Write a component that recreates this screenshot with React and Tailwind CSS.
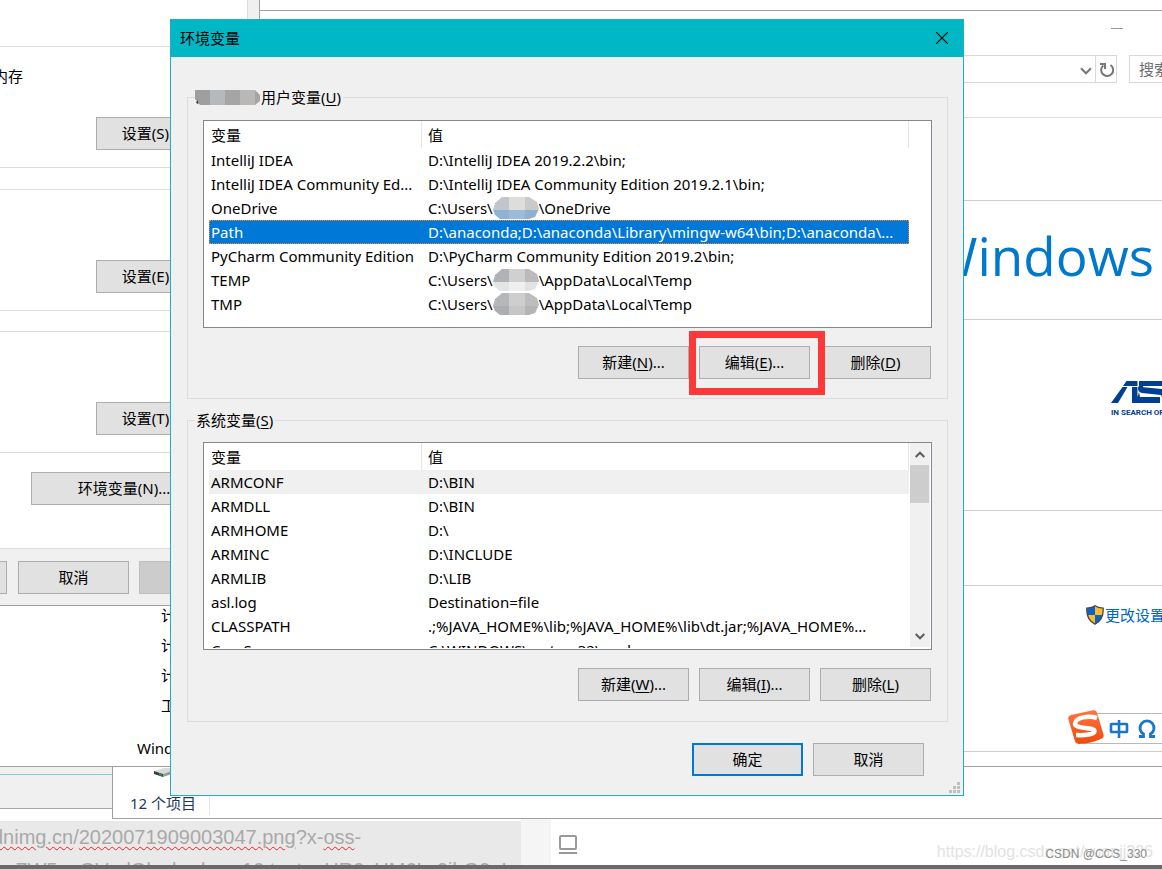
import React from "react";

const BTN =
  "flex h-[33px] w-[111px] shrink-0 items-center justify-center border border-[#adadad] bg-[#e1e1e1] pb-0.5 whitespace-nowrap";

function Key({ text, k, tail = "" }) {
  return (
    <span>
      {text}(<span className="underline underline-offset-2">{k}</span>){tail}
    </span>
  );
}

function Mosaic({ colors }) {
  return (
    <svg viewBox="0 0 46 22" className="inline-block h-[22px] w-[46px] align-middle" aria-hidden="true">
      <defs>
        <clipPath id={"m" + colors.join("").replace(/#/g, "")}>
          <path d="M9 0h27l8 5 2 7-4 8-6 2H7l-5-4-2-5 2-7z" />
        </clipPath>
      </defs>
      <g clipPath={`url(#m${colors.join("").replace(/#/g, "")})`}>
        {colors.map((c, i) => (
          <rect key={i} x={(i % 3) * 16} y={i < 3 ? 0 : 13} width="16" height="13" fill={c} />
        ))}
      </g>
    </svg>
  );
}

const userRows = [
  { name: "IntelliJ IDEA", value: "D:\\IntelliJ IDEA 2019.2.2\\bin;" },
  { name: "IntelliJ IDEA Community Ed...", value: "D:\\IntelliJ IDEA Community Edition 2019.2.1\\bin;" },
  {
    name: "OneDrive",
    value: "C:\\Users\\",
    mask: ["#c2c6ca", "#dddddb", "#cbcaca", "#8fb2d2", "#9dbbd8", "#8fb0cf"],
    rest: "\\OneDrive",
  },
  {
    name: "Path",
    value: "D:\\anaconda;D:\\anaconda\\Library\\mingw-w64\\bin;D:\\anaconda\\...",
    selected: true,
  },
  { name: "PyCharm Community Edition", value: "D:\\PyCharm Community Edition 2019.2\\bin;" },
  {
    name: "TEMP",
    value: "C:\\Users\\",
    mask: ["#b1b2b5", "#d0d0d0", "#bbbbbd", "#e3e4e4", "#efefef", "#e2e4e3"],
    rest: "\\AppData\\Local\\Temp",
  },
  {
    name: "TMP",
    value: "C:\\Users\\",
    mask: ["#b6b7b9", "#cecece", "#bcbdbe", "#adaeb1", "#c6c6c6", "#b3b4b5"],
    rest: "\\AppData\\Local\\Temp",
  },
];

const systemRows = [
  { name: "ARMCONF", value: "D:\\BIN", shaded: true },
  { name: "ARMDLL", value: "D:\\BIN" },
  { name: "ARMHOME", value: "D:\\" },
  { name: "ARMINC", value: "D:\\INCLUDE" },
  { name: "ARMLIB", value: "D:\\LIB" },
  { name: "asl.log", value: "Destination=file" },
  { name: "CLASSPATH", value: ".;%JAVA_HOME%\\lib;%JAVA_HOME%\\lib\\dt.jar;%JAVA_HOME%..." },
  { name: "ComSpec", value: "C:\\WINDOWS\\system32\\cmd.exe" },
];

function rowClass(row) {
  if (row.selected)
    return "h-6 bg-[#0078d7] text-white outline outline-1 -outline-offset-1 outline-dotted outline-[#ff8728]";
  if (row.shaded) return "h-6 bg-[#f0f0f0]";
  return "h-6";
}

function VariableTable({ rows, label }) {
  return (
    <table aria-label={label} className="w-full table-fixed border-separate border-spacing-0 text-left whitespace-nowrap">
      <colgroup>
        <col className="w-[213px]" />
        <col />
      </colgroup>
      <thead>
        <tr className="h-[27px]">
          <th className="border-r border-[#e5e5e5] p-0 pl-0.5 font-normal">变量</th>
          <th className="border-r border-[#e5e5e5] p-0 pl-1.5 font-normal">值</th>
        </tr>
      </thead>
      <tbody>
        {rows.map((row) => (
          <tr key={row.name} className={rowClass(row)}>
            <td className="p-0 pl-0.5 leading-6">{row.name}</td>
            <td className="p-0 pl-1.5 leading-6">
              <div className="flex h-6 items-center">
                {row.value}
                {row.mask && <Mosaic colors={row.mask} />}
                {row.rest}
              </div>
            </td>
          </tr>
        ))}
      </tbody>
    </table>
  );
}

function Chevron({ up }) {
  return (
    <svg viewBox="0 0 10 7" className="h-[7px] w-2.5" fill="none" stroke="#5c5c5c" strokeWidth="2">
      <path d={up ? "M.7 6L5 1.7 9.3 6" : "M.7 1L5 5.3 9.3 1"} />
    </svg>
  );
}

function Scrollbar() {
  return (
    <div className="mr-px mb-px flex w-[20px] shrink-0 flex-col bg-[#f0f0f0]">
      <button aria-label="向上滚动" className="flex h-[22px] w-[19px] items-center justify-center">
        <Chevron up />
      </button>
      <div className="h-[38px] w-[19px] bg-[#cdcdcd]" />
      <div className="flex-1" />
      <button aria-label="向下滚动" className="flex h-[22px] w-[19px] items-center justify-center">
        <Chevron />
      </button>
    </div>
  );
}

function EnvironmentDialog() {
  return (
    <section
      role="dialog"
      aria-label="环境变量"
      className="absolute top-[19px] left-[170px] z-20 w-[794px] border border-[#1fb0bd] bg-[#f0f0f0]"
    >
      <header className="flex h-[37px] items-center justify-between bg-[#00b7c6] pr-[15px] pb-0.5 pl-[9px]">
        <h1>环境变量</h1>
        <button aria-label="关闭">
          <svg viewBox="0 0 12 12" className="h-3 w-3" stroke="#000" strokeWidth="1.2">
            <path d="M0 0L12 12M12 0L0 12" />
          </svg>
        </button>
      </header>

      <div className="pt-[30px] pr-[15px] pb-[19px] pl-4">
        <fieldset className="border border-[#dcdcdc] px-[15px] pb-[19px]">
          <legend className="-ml-2 flex h-5 items-center px-0 pr-0.5">
            <svg viewBox="0 0 66 15" className="h-[15px] w-[66px]" aria-hidden="true">
              <path d="M0 0h15v15H5L0 9z" fill="#a09f9e" />
              <path d="M15 0h15v15H15z" fill="#b6b9bc" />
              <path d="M30 0h15v15H30z" fill="#a5a5a5" />
              <path d="M45 0h15v15H45z" fill="#bab8b6" />
              <path d="M60 0l5 5v6l-5 4z" fill="#a3a5a5" />
              <path d="M1 13l1.500-3 1 4z" fill="#333" />
            </svg>
            <Key text="用户变量" k="U" />
          </legend>
          <div className="mt-[13px] h-[208px] overflow-hidden border border-[#828790] bg-white pr-[22px] pl-[5px]">
            <VariableTable rows={userRows} label="用户变量" />
          </div>
          <div className="relative mt-[18px] flex justify-end gap-[10px] pr-px">
            <button className={BTN}>
              <Key text="新建" k="N" tail="..." />
            </button>
            <span className="relative flex">
              <button className={BTN}>
                <Key text="编辑" k="E" tail="..." />
              </button>
              <span className="pointer-events-none absolute -top-[15px] -left-[10px] h-16 w-[136px] border-[7px] border-[#fd3838]" />
            </span>
            <button className={BTN}>
              <Key text="删除" k="D" />
            </button>
          </div>
        </fieldset>

        <fieldset className="mt-[11px] border border-[#dcdcdc] px-[15px] pb-[20px]">
          <legend className="-ml-2 flex h-5 items-center px-px pr-0.5">
            <Key text="系统变量" k="S" />
          </legend>
          <div className="mt-[12px] flex h-[208px] overflow-hidden border border-[#828790] bg-white pb-px pl-[5px]">
            <div className="min-w-0 flex-1 overflow-hidden pr-px">
              <VariableTable rows={systemRows} label="系统变量" />
            </div>
            <Scrollbar />
          </div>
          <div className="mt-[18px] flex justify-end gap-[10px] pr-px">
            <button className={BTN}>
              <Key text="新建" k="W" tail="..." />
            </button>
            <button className={BTN}>
              <Key text="编辑" k="I" tail="..." />
            </button>
            <button className={BTN}>
              <Key text="删除" k="L" />
            </button>
          </div>
        </fieldset>

        <div className="mt-[21px] flex justify-end gap-[10px] pr-6">
          <button className="flex h-[33px] w-[111px] items-center justify-center border-2 border-[#0078d7] bg-[#e1e1e1] pb-0.5">
            确定
          </button>
          <button className={BTN}>取消</button>
        </div>
      </div>
      <svg viewBox="0 0 11 11" className="absolute right-[3px] bottom-[2px] h-[11px] w-[11px]" fill="#bfbfbf">
        <path d="M8 0h3v3H8zM4 4h3v3H4zM8 4h3v3H8zM0 8h3v3H0zM4 8h3v3H4zM8 8h3v3H8z" />
      </svg>
    </section>
  );
}

function SettingsButton({ k }) {
  return <button className={BTN + " ml-24"}>设置({k})...</button>;
}

function SystemProperties() {
  return (
    <section className="absolute top-0 left-0 z-10 w-[260px] border-r border-b border-[#a0a0a0] bg-[#f0f0f0]">
      <div className="h-[549px] w-[248px] border-r border-b border-[#dcdcdc] bg-white">
        <div className="h-[47px] border-b border-[#dcdcdc]" />
        <div className="flex h-[121px] flex-col justify-between border-b border-[#dcdcdc] pt-[19px] pb-[17px]">
          <p className="-ml-[7px]">内存</p>
          <SettingsButton k="S" />
        </div>
        <div className="mt-[21px] flex h-[122px] items-end border-y border-[#dcdcdc] pb-[17px]">
          <SettingsButton k="E" />
        </div>
        <div className="mt-5 flex h-[122px] items-end border-y border-[#dcdcdc] pb-[17px]">
          <SettingsButton k="T" />
        </div>
        <button className="mt-[19px] ml-[31px] flex h-[33px] w-[186px] items-center justify-center border border-[#adadad] bg-[#e1e1e1] pb-0.5">
          环境变量(N)...
        </button>
      </div>
      <div className="flex h-14 gap-[10px] overflow-hidden pt-3">
        <div className="-ml-px h-[33px] w-2 shrink-0 border border-l-0 border-[#adadad] bg-[#e1e1e1]" />
        <button className={BTN + " ml-px"}>取消</button>
        <button className="h-[33px] w-[111px] shrink-0 border border-[#bfbfbf] bg-[#cccccc] text-[#838383]">
          应用(A)
        </button>
      </div>
    </section>
  );
}

function Shield() {
  return (
    <svg viewBox="0 0 18 20" className="h-5 w-[18px] shrink-0" aria-hidden="true">
      <defs>
        <clipPath id="shield">
          <path d="M9 .8C6.500 2.600 3.500 3 .8 3.200 .4 10.500 2.500 16 9 19.200 15.500 16 17.600 10.500 17.200 3.200 14.500 3 11.500 2.600 9 .8z" />
        </clipPath>
      </defs>
      <g clipPath="url(#shield)">
        <path d="M0 0h9v10H0zM9 10h9v10H9z" fill="#0a64c8" />
        <path d="M9 0h9v10H9zM0 10h9v10H0z" fill="#fdbb2e" />
      </g>
      <path
        d="M9 .8C6.500 2.600 3.500 3 .8 3.200 .4 10.500 2.500 16 9 19.200 15.500 16 17.600 10.500 17.200 3.200 14.500 3 11.500 2.600 9 .8z"
        fill="none"
        stroke="#4a4a4a"
        strokeWidth="1.300"
      />
    </svg>
  );
}

function SystemWindow() {
  return (
    <section className="absolute inset-x-0 top-[10px] h-[757px] overflow-hidden border-y border-[#a0a0a0] bg-white">
      <div className="flex h-[44px] justify-end pt-[17px] pr-[39px]">
        <button aria-label="最小化" className="h-px w-3 bg-[#999999]" />
      </div>
      <div className="flex h-7">
        <div className="flex flex-1 items-center justify-end border border-[#d9d9d9]">
          <svg viewBox="0 0 12 8" className="mt-1 mr-[3px] h-2 w-3" fill="none" stroke="#777" strokeWidth="2">
            <path d="M1 1.300l5 5 5-5" />
          </svg>
          <button aria-label="刷新" className="flex h-full w-[21px] items-center justify-center border-l border-[#d9d9d9] pt-0.5 pl-px">
            <svg viewBox="0 0 14 14" className="h-3.5 w-3.5" fill="none" stroke="#777" strokeWidth="2">
              <path d="M10.500 2A6 6 0 1 1 3.300 2.400" />
              <path d="M0 1h5v5" />
            </svg>
          </button>
        </div>
        <div className="ml-3 w-[33px] overflow-hidden border border-r-0 border-[#d9d9d9] pl-[9px] leading-[26px] whitespace-nowrap text-[#6d6d6d]">
          搜索控制面板
        </div>
      </div>
      <div className="h-[35px] border-b border-[#dcdcdc]" />
      <div className="h-[83px] border-b border-[#cccccc]" />
      <div className="flex h-[119px] items-center justify-end border-b border-[#cccccc] pr-2 pb-2">
        <span className="font-['Open_Sans'] text-[53px] leading-[60px] text-[#0078cc]">Windows</span>
      </div>
      <div className="flex h-[191px] flex-col items-end overflow-hidden border-b border-[#cccccc] pt-[60px] text-[#00408f]">
        <svg viewBox="0 0 51 23" className="h-[23px] w-[51px]" fill="currentColor" aria-label="ASUS">
          <path d="M15.500 1h11v5H12zM11.500 7h5L7 23H0zM21 7h5.500v16H21zM28 1h23v5H33c-1 0-1.500 1-.5 1.200L51 9v8l-1-2-19-2c-4-.5-5-5.500-3-7zM28 12l1 5h20v6H26.500v-6z" />
        </svg>
        <span className="mt-0.5 w-[51px] font-['Roboto'] text-[8px] leading-4 font-bold whitespace-nowrap">
          IN SEARCH OF INCREDIBLE
        </span>
      </div>
      <div className="h-[75px] border-b border-[#cccccc]" />
      <div className="flex justify-between pt-[14px] pl-[161px]">
        <div className="leading-[30px]">
          <p>计算机名:</p>
          <p>计算机全名:</p>
          <p>计算机描述:</p>
          <p>工作组:</p>
        </div>
        <a href="#settings" className="flex h-[30px] w-[76px] items-center overflow-hidden whitespace-nowrap text-[#0066cc]">
          <Shield />
          <span className="ml-px">更改设置</span>
        </a>
      </div>
      <div className="mt-4 flex items-end gap-2 pl-[137px] leading-6">
        <span>Windows 激活</span>
        <span className="mb-2 h-px flex-1 bg-[#cccccc]" />
      </div>
    </section>
  );
}

function BackWindows() {
  return (
    <>
      <section className="absolute inset-x-0 top-[760px] h-[49px] border-b border-[#a8a8a8] bg-[#f0f0f0] pt-[14px]">
        <div className="h-px bg-[#7ad2d6]" />
      </section>
      <section className="absolute top-[760px] right-0 left-[112px] flex h-[59px] flex-col border-b border-l border-[#a0a0a0] bg-white">
        <svg viewBox="0 0 26 10" className="mt-2 ml-[41px] h-2.5 w-[26px] shrink-0" aria-hidden="true">
          <path d="M0 3L10 0h14l-8 5-7 1z" fill="#d9dadb" />
          <path d="M0 3l9 3v3L0 6z" fill="#3a3d3c" />
          <path d="M9 6l12-4v3L9 9z" fill="#9b9c9d" />
          <path d="M5 5l3 1v2l-3-1z" fill="#23a13a" />
        </svg>
        <p className="mt-[13px] ml-[17px] w-20 border-r border-[#e8e8e8] leading-6 text-[#1e395b]">12 个项目</p>
      </section>
    </>
  );
}

function Editor() {
  const wavy = "underline decoration-[#f0222a] decoration-wavy decoration-1 underline-offset-2";
  return (
    <section className="absolute inset-x-0 top-[819px] flex h-[50px] overflow-hidden border-b-4 border-[#6b6969] bg-white">
      <div className="mt-0.5 w-[521px] overflow-hidden bg-[#e9e9e9] font-['Liberation_Sans'] text-xl leading-[33px] whitespace-nowrap text-[#a9a9a9]">
        <p className="-ml-2">
          <span className={wavy}>dnimg.cn</span>/<span className={wavy}>2020071909003047.png</span>?x-
          <span className={wavy}>oss</span>-
        </p>
        <p className="-ml-[7px]">poZW5naGVpdGk,shadow_10,text_aHR0cHM6Ly9ibG9nL</p>
      </div>
      <div className="w-[30px] bg-[#f5f5f5]" />
      <svg viewBox="0 0 20 20" className="mt-4 ml-[7px] h-5 w-5" fill="none" stroke="#999" strokeWidth="2">
        <rect x="2" y="1" width="16" height="13" rx="1" />
        <path d="M1 18h18" />
      </svg>
    </section>
  );
}

function InputMethodBar() {
  return (
    <aside className="absolute top-[709px] right-0 z-10 flex h-9 w-[95px] items-center">
      <div className="absolute top-1 right-0 left-4 h-[31px] border-y border-[#b5b8bf] bg-white" />
      <svg viewBox="0 0 38 36" className="relative h-9 w-[38px] shrink-0" aria-hidden="true">
        <defs>
          <linearGradient id="sogou" x1="0" y1="0" x2="0" y2="1">
            <stop offset="0" stopColor="#ff7444" />
            <stop offset="1" stopColor="#f04a08" />
          </linearGradient>
        </defs>
        <path
          d="M4 6L26 1.300q3-.6 4 2.200l6.500 22q.8 3-2 4.300Q24 34.500 12 35q-3 .2-4-2.800L1.300 10Q.8 7 4 6z"
          fill="url(#sogou)"
        />
        <path
          d="M30 9C21 6 9 8.500 8 14.500c-.8 5.500 19 3.500 19.500 7.500.3 3.500-9 4.500-18.500 4"
          fill="none"
          stroke="#fff"
          strokeWidth="4.500"
        />
      </svg>
      <svg viewBox="0 0 20 20" className="relative mt-1 ml-1 h-5 w-5 shrink-0" fill="none" stroke="#1b75cc" strokeWidth="2.600" aria-label="中">
        <rect x="2" y="5" width="16" height="8" rx=".6" />
        <path d="M10 1v18" />
      </svg>
      <svg viewBox="0 0 20 20" className="relative mt-1 ml-2 h-5 w-5 shrink-0" fill="none" stroke="#1b75cc" strokeWidth="2.800" aria-label="Ω">
        <path d="M2 17.500h4.500V15A7 7 0 1 1 13.500 15v2.500H18" />
      </svg>
    </aside>
  );
}

export default function App() {
  return (
    <main className="relative h-screen min-h-[869px] overflow-hidden bg-white font-['Noto_Sans','Noto_Sans_CJK_SC',sans-serif] text-[15px] leading-5 text-black">
      <BackWindows />
      <SystemWindow />
      <SystemProperties />
      <EnvironmentDialog />
      <Editor />
      <InputMethodBar />
      <footer className="absolute top-[840px] right-[9px] font-['Liberation_Sans'] whitespace-nowrap">
        <p className="text-base leading-6 text-[#e2e2e2]">https://blog.csdn.net/yuanjj326</p>
        <p className="absolute top-[4px] right-1.5 text-xs leading-5 text-[#8c8c8c]">CSDN @CCS_330</p>
      </footer>
    </main>
  );
}
